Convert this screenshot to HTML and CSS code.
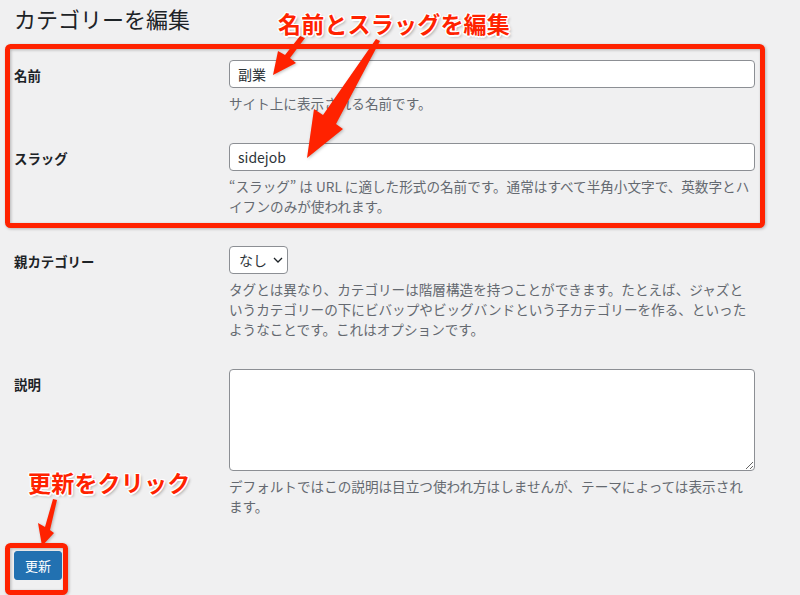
FILE: index.html
```html
<!DOCTYPE html>
<html lang="ja">
<head>
  <meta charset="UTF-8">
  <meta name="viewport" content="width=device-width, initial-scale=1.0">
  <title>カテゴリーを編集</title>
  <link rel="stylesheet" href="styles.css">
</head>
<body>
  <div class="wrap">
    <h1>カテゴリーを編集</h1>

    <form class="edit-tag">
      <div class="row">
        <div class="row-label"><label for="name">名前</label></div>
        <div class="row-field">
          <input type="text" id="name" value="副業">
          <p class="description">サイト上に表示される名前です。</p>
        </div>
      </div>

      <div class="row">
        <div class="row-label"><label for="slug">スラッグ</label></div>
        <div class="row-field">
          <input type="text" id="slug" value="sidejob">
          <p class="description">“スラッグ” は URL に適した形式の名前です。通常はすべて半角小文字で、英数字とハイフンのみが使われます。</p>
        </div>
      </div>

      <div class="row">
        <div class="row-label"><label>親カテゴリー</label></div>
        <div class="row-field">
          <div class="select">
            <span>なし</span>
            <svg width="10" height="6" viewBox="0 0 10 6"><path d="M1 1l4 4 4-4" fill="none" stroke="#1d2327" stroke-width="1.3"/></svg>
          </div>
          <p class="description">タグとは異なり、カテゴリーは階層構造を持つことができます。たとえば、ジャズというカテゴリーの下にビバップやビッグバンドという子カテゴリーを作る、といったようなことです。これはオプションです。</p>
        </div>
      </div>

      <div class="row">
        <div class="row-label"><label for="desc">説明</label></div>
        <div class="row-field">
          <textarea id="desc"></textarea>
          <p class="description">デフォルトではこの説明は目立つ使われ方はしませんが、テーマによっては表示されます。</p>
        </div>
      </div>

      <div class="submit">
        <button type="button" class="button-primary">更新</button>
      </div>
    </form>
  </div>

  <!-- annotations -->
  <svg class="marks" width="800" height="595" viewBox="0 0 800 595">
    <rect x="7.5" y="46.5" width="755" height="179" rx="3" fill="none" stroke="#ff2200" stroke-width="5"/>
    <rect x="7.5" y="545.5" width="58" height="47" rx="3" fill="none" stroke="#ff2200" stroke-width="5"/>
    <polygon points="300,36 305,38 290,58 296,63 273,75 278,51 285,55" fill="#ff2200"/>
    <polygon points="376,39 380,41 336,124 343,129 307,158 314,109 323,115" fill="#ff2200"/>
    <polygon points="53,499 57,500 50,530 54,533 42,546 38,523 45,527" fill="#ff2200"/>
  </svg>
  <div class="callout callout-top">名前とスラッグを編集</div>
  <div class="callout callout-bottom">更新をクリック</div>
</body>
</html>
```

FILE: styles.css
```css
body {
  margin: 0;
  background: #f0f0f1;
  color: #1d2327;
  font-family: "Noto Sans CJK JP", "Liberation Sans", sans-serif;
  font-size: 13.6px;
  overflow: hidden;
}

.wrap {
  padding: 0 14px;
}

h1 {
  font-size: 22px;
  font-weight: 400;
  line-height: 30px;
  margin: 3px 0 12px;
}

.row {
  display: flex;
}

.row-label {
  width: 215px;
  flex-shrink: 0;
  padding: 20px 0;
}

.row-label label {
  font-size: 13.4px;
  font-weight: 700;
  line-height: 17px;
}

.row-field {
  width: 526px;
  padding: 15px 0;
}

input[type="text"] {
  display: block;
  box-sizing: border-box;
  width: 526px;
  height: 28px;
  margin: 0;
  padding: 0 8px;
  border: 1px solid #8c8f94;
  border-radius: 4px;
  background: #fff;
  color: #2c3338;
  font-family: inherit;
  font-size: 14px;
}

.description {
  max-width: 522px;
  margin: 5px 0 0;
  color: #646970;
  line-height: 20px;
}

.select {
  box-sizing: border-box;
  width: 59px;
  height: 28px;
  display: flex;
  align-items: center;
  gap: 6px;
  padding: 0 0 0 9px;
  margin-bottom: 2px;
  border: 1px solid #8c8f94;
  border-radius: 4px;
  background: #fff;
  font-size: 14px;
  color: #2c3338;
  white-space: nowrap;
}

.select svg {
  flex-shrink: 0;
}

textarea {
  display: block;
  box-sizing: border-box;
  width: 526px;
  height: 102px;
  margin: 0 0 4px;
  border: 1px solid #8c8f94;
  border-radius: 4px;
  background: #fff;
}

.submit {
  padding: 20px 0;
}

.button-primary {
  height: 29px;
  padding: 0 10px;
  border: 1px solid #2271b1;
  border-radius: 3px;
  background: #2271b1;
  color: #fff;
  font-family: inherit;
  font-size: 13px;
}

.marks {
  position: absolute;
  top: 0;
  left: 0;
  pointer-events: none;
  filter: drop-shadow(1px 1px 1.5px rgba(0, 0, 0, 0.25));
}

.callout {
  position: absolute;
  color: #ff2200;
  font-weight: 700;
  font-size: 23px;
  line-height: 30px;
  letter-spacing: 0.2px;
  text-shadow:
    -1.5px 0 0 #fff, 1.5px 0 0 #fff, 0 -1.5px 0 #fff, 0 1.5px 0 #fff,
    -1px -1px 0 #fff, 1px 1px 0 #fff, -1px 1px 0 #fff, 1px -1px 0 #fff,
    2px 2px 3px rgba(0, 0, 0, 0.3);
}

.callout-top {
  left: 278px;
  top: 8px;
}

.callout-bottom {
  left: 28px;
  top: 467px;
}
```
